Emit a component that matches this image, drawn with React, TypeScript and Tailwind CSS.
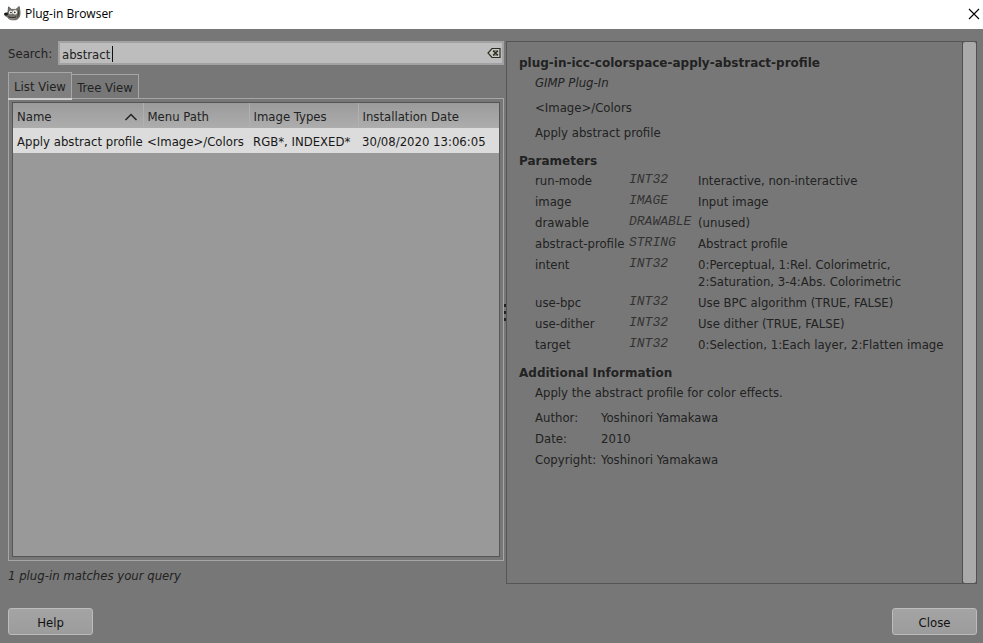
import { useState } from 'react';
import clsx from 'clsx';

type Parameter = {
  name: string;
  type: string;
  description: string[];
};

const parameters: Parameter[] = [
  { name: 'run-mode', type: 'INT32', description: ['Interactive, non-interactive'] },
  { name: 'image', type: 'IMAGE', description: ['Input image'] },
  { name: 'drawable', type: 'DRAWABLE', description: ['(unused)'] },
  { name: 'abstract-profile', type: 'STRING', description: ['Abstract profile'] },
  {
    name: 'intent',
    type: 'INT32',
    description: ['0:Perceptual, 1:Rel. Colorimetric,', '2:Saturation, 3-4:Abs. Colorimetric'],
  },
  { name: 'use-bpc', type: 'INT32', description: ['Use BPC algorithm (TRUE, FALSE)'] },
  { name: 'use-dither', type: 'INT32', description: ['Use dither (TRUE, FALSE)'] },
  { name: 'target', type: 'INT32', description: ['0:Selection, 1:Each layer, 2:Flatten image'] },
];

const credits = [
  { label: 'Author:', value: 'Yoshinori Yamakawa' },
  { label: 'Date:', value: '2010' },
  { label: 'Copyright:', value: 'Yoshinori Yamakawa' },
];

function WilberIcon() {
  return (
    <svg width="17" height="16" viewBox="0 0 17 16" aria-hidden="true">
      <path
        d="M4 5.500 4.600.8 7.600 3.400h4.200L15.200.4 16 5.600c.3 4-.6 7.400-4.600 8.200H7.800C5.600 13.600 4 12.400 3.400 10.800L1 9.600Z"
        fill="#75726b"
        stroke="#4a4844"
        strokeWidth=".7"
      />
      <path d="M14 3.200 15 6c.2 2.600-.4 4.600-2 6 .8-3 1-6 1-8.800Z" fill="#3e3c38" />
      <circle cx="6.800" cy="6.400" r="1.900" fill="#f4f4f2" />
      <circle cx="11" cy="6.200" r="2.200" fill="#f4f4f2" />
      <circle cx="7" cy="6.600" r=".8" fill="#161616" />
      <circle cx="10.800" cy="6.400" r=".8" fill="#161616" />
      <ellipse cx="2" cy="8" rx="2" ry="1.500" fill="#191919" />
      <path d="M4.500 10.600c2.200 1.500 5 1.500 7.600.2" fill="none" stroke="#24221f" strokeWidth=".9" />
      <path d="M5.600 12.400c1.600.8 3.600.8 5 0" fill="none" stroke="#a9a69e" strokeWidth=".8" />
    </svg>
  );
}

function CloseIcon() {
  return (
    <svg width="12" height="12" viewBox="0 0 12 12" aria-hidden="true">
      <path d="m1 1 10 10M11 1 1 11" stroke="#000" strokeWidth="1.1" fill="none" />
    </svg>
  );
}

function ClearIcon() {
  return (
    <svg width="14" height="12" viewBox="0 0 14 12" aria-hidden="true">
      <path d="M5 1.500h8v9H5L1 6Z" fill="#c9c9b8" stroke="#2b2b2b" strokeWidth="1.200" />
      <path d="m6 3.800 5 4.400M11 3.800 6 8.200" stroke="#2b2b2b" strokeWidth="1.300" fill="none" />
      <path d="M6 4h5M6 8h5" stroke="#2b2b2b" strokeWidth=".8" />
    </svg>
  );
}

function SortIcon() {
  return (
    <svg width="14" height="8" viewBox="0 0 14 8" aria-hidden="true">
      <path d="m1.500 7 5.500-5.500L12.500 7" stroke="#222" strokeWidth="1.500" fill="none" />
    </svg>
  );
}

function TitleBar() {
  return (
    <header className="flex h-[29px] items-center bg-white pb-0.5 pl-1 text-black">
      <WilberIcon />
      <h1 className="ml-1 flex-1 font-['Open_Sans',sans-serif] text-xs">Plug-in Browser</h1>
      <button type="button" aria-label="Close window" className="px-[3px]">
        <CloseIcon />
      </button>
    </header>
  );
}

function SearchField({ value, onChange }: { value: string; onChange: (value: string) => void }) {
  return (
    <div className="flex h-6 items-center">
      <label htmlFor="search" className="w-[50px] shrink-0">
        Search:
      </label>
      <div className="relative flex h-6 flex-1 items-center border-2 border-[#a2a2a2] bg-[#bdbdbd]">
        <input
          id="search"
          type="text"
          value={value}
          onChange={(e) => onChange(e.target.value)}
          className="h-full min-w-0 flex-1 bg-transparent pt-0.5 pl-0.5 outline-none"
        />
        <span className="absolute top-[3px] left-[52px] h-4 w-px bg-[#111]" />
        <button type="button" aria-label="Clear search" onClick={() => onChange('')} className="pr-px">
          <ClearIcon />
        </button>
      </div>
    </div>
  );
}

function ResultsTable() {
  const headCell = 'border-r border-[#b0b0b0] pt-0.5 pl-1 text-left font-normal last:border-r-0';
  const bodyCell = 'pt-0.5 pl-1';

  return (
    <table className="w-full table-fixed border-collapse whitespace-nowrap">
      <colgroup>
        <col className="w-[130px]" />
        <col className="w-[106px]" />
        <col className="w-[109px]" />
        <col />
      </colgroup>
      <thead>
        <tr className="h-[25px] bg-linear-to-b from-[#9b9b9b] to-[#adadad]">
          <th className={headCell}>
            <span className="flex items-center justify-between pr-[5px]">
              Name
              <SortIcon />
            </span>
          </th>
          <th className={headCell}>Menu Path</th>
          <th className={headCell}>Image Types</th>
          <th className={headCell}>Installation Date</th>
        </tr>
      </thead>
      <tbody>
        <tr className="h-[25px] bg-[#dcdcdc] text-[#181818]">
          <td className={bodyCell}>Apply abstract profile</td>
          <td className={bodyCell}>&lt;Image&gt;/Colors</td>
          <td className={bodyCell}>RGB*, INDEXED*</td>
          <td className={bodyCell}>30/08/2020 13:06:05</td>
        </tr>
      </tbody>
    </table>
  );
}

function PluginDetails() {
  const heading = "font-['DejaVu_Sans',sans-serif] text-xs leading-[17px] font-bold";

  return (
    <section className="flex min-w-0 border border-r-0 border-[#555]">
      <div className="min-w-0 flex-1 px-3 pt-[13px]">
        <h2 className={heading}>plug-in-icc-colorspace-apply-abstract-profile</h2>
        <div className="mt-0.5 space-y-2 pl-4">
          <p className="italic">GIMP Plug-In</p>
          <p>&lt;Image&gt;/Colors</p>
          <p>Apply abstract profile</p>
        </div>

        <h2 className={clsx(heading, 'mt-3')}>Parameters</h2>
        <table className="ml-4">
          <tbody>
            {parameters.map((param) => (
              <tr key={param.name} className="align-top">
                <td className="w-[94px] py-0.5">{param.name}</td>
                <td className="w-[69px] pt-px font-['Liberation_Mono',monospace] text-[#333] italic">{param.type}</td>
                <td className="py-0.5 whitespace-nowrap">
                  {param.description.map((line) => (
                    <div key={line}>{line}</div>
                  ))}
                </td>
              </tr>
            ))}
          </tbody>
        </table>

        <h2 className={clsx(heading, 'mt-2.5')}>Additional Information</h2>
        <div className="mt-0.5 pl-4">
          <p>Apply the abstract profile for color effects.</p>
          <dl className="mt-2 grid grid-cols-[66px_1fr] gap-y-1">
            {credits.map(({ label, value }) => (
              <div key={label} className="contents">
                <dt>{label}</dt>
                <dd>{value}</dd>
              </div>
            ))}
          </dl>
        </div>
      </div>
      <div className="flex w-[15px] border-x border-[#505050] bg-[#505050]">
        <div className="flex-1 rounded-xs bg-[#aaa]" />
      </div>
    </section>
  );
}

export default function App() {
  const [query, setQuery] = useState('abstract ');
  const [view, setView] = useState<'list' | 'tree'>('list');

  const actionButton =
    'h-[27px] w-[85px] rounded-[3px] border border-[#bcbcbc] bg-linear-to-b from-[#a4a4a4] to-[#9c9c9c] pt-0.5 text-[#111]';

  return (
    <div className="flex min-h-screen flex-col bg-[#777] font-['DejaVu_Sans_Condensed','DejaVu_Sans',sans-serif] text-[13px] leading-[17px] text-[#222]">
      <TitleBar />

      <main className="grid flex-1 grid-cols-[minmax(0,496fr)_2px_minmax(0,471fr)] pt-3 pr-1.5 pl-2">
        <div className="flex flex-col">
          <SearchField value={query} onChange={setQuery} />

          <div role="tablist" className="mt-[7px] flex h-[26px] items-end">
            <button
              type="button"
              role="tab"
              aria-selected={view === 'list'}
              onClick={() => setView('list')}
              className={clsx(
                'w-16 border border-b-0 border-[#a6a6a6] pt-0.5',
                view === 'list' ? 'h-[26px] bg-[#808080]' : 'h-6',
              )}
            >
              List View
            </button>
            <button
              type="button"
              role="tab"
              aria-selected={view === 'tree'}
              onClick={() => setView('tree')}
              className={clsx(
                'w-[67px] border border-b-0 border-l-0 border-[#a6a6a6] pt-0.5',
                view === 'tree' ? 'h-[26px] bg-[#808080]' : 'h-6',
              )}
            >
              Tree View
            </button>
          </div>
          <div className="relative flex flex-1 border border-[#a6a6a6] p-[3px]">
            <span
              className={clsx('absolute -top-px h-0.5 bg-[#cfcfcf]', view === 'list' ? '-left-px w-16' : 'left-[63px] w-[67px]')}
            />
            <div className="min-w-0 flex-1 border border-[#555] bg-[#999]">
              <ResultsTable />
            </div>
          </div>

          <p className="mt-[7px] leading-4 italic">1 plug-in matches your query</p>
        </div>

        <div className="flex flex-col items-center justify-center gap-1 self-center">
          <span className="size-[3px] bg-[#222]" />
          <span className="size-[3px] bg-[#222]" />
          <span className="size-[3px] bg-[#222]" />
        </div>

        <PluginDetails />
      </main>

      <footer className="mt-6 flex justify-between pr-1.5 pb-2 pl-2">
        <button type="button" className={actionButton}>
          Help
        </button>
        <button type="button" className={actionButton}>
          Close
        </button>
      </footer>
    </div>
  );
}
